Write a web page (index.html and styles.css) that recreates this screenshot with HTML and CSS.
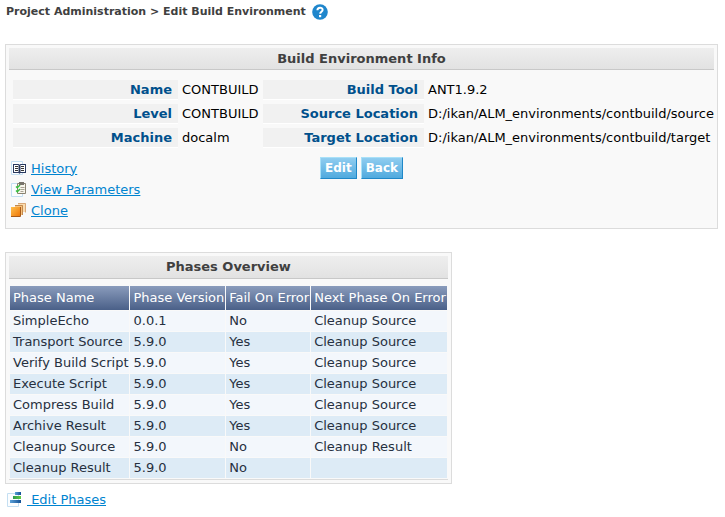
FILE: index.html
```html
<!DOCTYPE html>
<html lang="en">
<head>
<meta charset="utf-8">
<title>Edit Build Environment</title>
<link rel="stylesheet" href="styles.css">
</head>
<body>
<header class="crumbs">
  <h1>Project Administration &gt; Edit Build Environment</h1>
  <a class="help" href="#" aria-label="Help">
    <svg width="16" height="16" viewBox="0 0 16 16"><circle cx="8" cy="8" r="7.8" fill="#1f86cc"/><path d="M5.400 6.200C5.500 3 10.700 3 10.600 6 10.600 7.800 8.200 7.900 8.200 9.800" fill="none" stroke="#fff" stroke-width="2"/><rect x="7" y="11" width="2.200" height="2.200" fill="#fff"/></svg>
  </a>
</header>

<section class="panel info">
  <h2>Build Environment Info</h2>
  <dl class="props">
    <dt>Name</dt><dd>CONTBUILD</dd>
    <dt>Build Tool</dt><dd>ANT1.9.2</dd>
    <dt>Level</dt><dd>CONTBUILD</dd>
    <dt>Source Location</dt><dd>D:/ikan/ALM_environments/contbuild/source</dd>
    <dt>Machine</dt><dd>docalm</dd>
    <dt>Target Location</dt><dd>D:/ikan/ALM_environments/contbuild/target</dd>
  </dl>
  <div class="actions">
    <ul class="links">
      <li>
        <svg width="16" height="16" viewBox="0 0 16 16"><path d="M.5.5h11v13H.5z" fill="#fbfdff" stroke="#c4dff2"/><path d="M2 3h5.500l1 .8L9.500 3H15v9H9.500l-1 .8-1-.8H2z" fill="#2a3a60"/><path d="M3 4h4.500v7H3zM9.500 4H14v7H9.500z" fill="#fff"/><path d="M4 5.500h3M4 7.500h3M4 9.500h3M10 5.500h3M10 7.500h3M10 9.500h3" stroke="#333"/></svg>
        <a href="#">History</a>
      </li>
      <li>
        <svg width="16" height="16" viewBox="0 0 16 16"><path d="M.5 1.500h11v13H.5z" fill="#fbfdff" stroke="#c4dff2"/><path d="M6.500 1.500h8v10h-8z" fill="#f8f5ec" stroke="#8a8371"/><path d="M8 0h5v3H8z" fill="#77736b"/><path d="M9.500 5.500h4M9.500 7.500h4M9.500 9.500h3" stroke="#a8a395"/><path d="M5 4.500l1.300 1.300L9 3M5 8.500l1.300 1.300L9 7" fill="none" stroke="#32c23c" stroke-width="1.400"/></svg>
        <a href="#">View Parameters</a>
      </li>
      <li>
        <svg width="16" height="16" viewBox="0 0 16 16"><defs><linearGradient id="o" x1="0" y1="0" x2="1" y2="1"><stop stop-color="#ffc04c"/><stop offset="1" stop-color="#ee7406"/></linearGradient></defs><path d="M7 0h8v9H7z" fill="#f9dcb0"/><path d="M7 .5h7.500v9" fill="none" stroke="#d9a878"/><path d="M4 2h8v10H4z" fill="#f8c078"/><path d="M4 2.500h7.500V12" fill="none" stroke="#c08850"/><path d="M0 4h9v10H0z" fill="url(#o)"/><path d="M0 13.500h9.500V4" fill="none" stroke="#a85a18"/></svg>
        <a href="#">Clone</a>
      </li>
    </ul>
    <div class="buttons">
      <button type="button">Edit</button>
      <button type="button">Back</button>
    </div>
  </div>
</section>

<section class="panel phases">
  <h2>Phases Overview</h2>
  <table>
    <thead>
      <tr><th>Phase Name</th><th>Phase Version</th><th>Fail On Error</th><th>Next Phase On Error</th></tr>
    </thead>
    <tbody>
      <tr><td>SimpleEcho</td><td>0.0.1</td><td>No</td><td>Cleanup Source</td></tr>
      <tr><td>Transport Source</td><td>5.9.0</td><td>Yes</td><td>Cleanup Source</td></tr>
      <tr><td>Verify Build Script</td><td>5.9.0</td><td>Yes</td><td>Cleanup Source</td></tr>
      <tr><td>Execute Script</td><td>5.9.0</td><td>Yes</td><td>Cleanup Source</td></tr>
      <tr><td>Compress Build</td><td>5.9.0</td><td>Yes</td><td>Cleanup Source</td></tr>
      <tr><td>Archive Result</td><td>5.9.0</td><td>Yes</td><td>Cleanup Source</td></tr>
      <tr><td>Cleanup Source</td><td>5.9.0</td><td>No</td><td>Cleanup Result</td></tr>
      <tr><td>Cleanup Result</td><td>5.9.0</td><td>No</td><td></td></tr>
    </tbody>
  </table>
</section>
<div class="edit-phases">
  <svg width="16" height="16" viewBox="0 0 16 16"><defs><linearGradient id="b"><stop stop-color="#5aa0d8"/><stop offset="1" stop-color="#124f94"/></linearGradient><linearGradient id="g"><stop stop-color="#2c9a50"/><stop offset="1" stop-color="#62cc40"/></linearGradient></defs><path d="M.5 1.500h11v13H.5z" fill="#fbfdff" stroke="#c4dff2"/><path d="M8 0h6v3H8z" fill="url(#b)"/><path d="M6 4h8v3H6z" fill="url(#g)"/><path d="M3 8h11v3H3z" fill="url(#b)"/></svg>
  <a href="#">&nbsp;Edit Phases</a>
</div>
</body>
</html>
```
FILE: styles.css
```css
* {
  box-sizing: border-box;
}

body {
  margin: 4px 7px 8px 5px;
  background: #fff;
  color: #000;
  font: 13px/16px "DejaVu Sans", Verdana, sans-serif;
}

h1,
h2,
dl,
dd,
ul {
  margin: 0;
  padding: 0;
}

svg {
  display: block;
  flex: none;
}

a {
  color: #0084d0;
}

.crumbs {
  display: flex;
  align-items: center;
  gap: 6px;
  padding-left: 1px;
  margin-bottom: 24px;
}

h1 {
  color: #404040;
  font-size: 11px;
  line-height: 16px;
}

.panel {
  padding: 3px;
  border: 1px solid #dcdcdc;
  background: #f9f9f9;
}

h2 {
  height: 22px;
  border-bottom: 1px solid #c8c8c8;
  background: linear-gradient(#eee, #e2e2e2);
  color: #404040;
  font-size: 13px;
  line-height: 21px;
  text-align: center;
}

.props {
  display: grid;
  grid-template-columns: 165px 77px 161px 1fr;
  gap: 4px;
  padding: 10px 0 0 4px;
}

.props dt {
  padding-right: 6px;
  border-bottom: 1px solid #fff;
  background: #f1f1f1;
  color: #00508c;
  font-weight: bold;
  line-height: 19px;
  text-align: right;
}

.props dd {
  line-height: 19px;
  white-space: nowrap;
}

.actions {
  display: grid;
  grid-template-columns: 1fr auto 1fr;
  align-items: start;
  padding: 9px 2px 4px;
}

.links {
  padding-top: 1px;
  list-style: none;
}

.links li,
.edit-phases {
  display: flex;
  align-items: center;
  gap: 4px;
  height: 21px;
}

.buttons {
  display: flex;
  gap: 4px;
}

button {
  height: 22px;
  padding: 0 4px;
  border: 1px solid;
  border-color: #a8e0f8 #2088c8 #2088c8 #a8e0f8;
  background: linear-gradient(#90cdf0, #50aade);
  color: #fff;
  font: bold 12px/20px "DejaVu Sans", Verdana, sans-serif;
}

.phases {
  width: fit-content;
  margin-top: 23px;
}

.phases h2 {
  height: 23px;
}

table {
  margin-top: 6px;
  border-bottom: 1px solid #dcdcdc;
  border-spacing: 1px;
  white-space: nowrap;
}

th,
td {
  height: 20px;
  padding: 0 1px 0 3px;
  text-align: left;
}

th {
  height: 24px;
  background: linear-gradient(#8a9cbc, #4a6088);
  color: #fff;
  font-weight: normal;
}

td {
  background: #f3f7fc;
  color: #263040;
}

tr:nth-child(even) td {
  background: #ddebf6;
}

.edit-phases {
  padding-left: 2px;
  margin-top: 5px;
}
```
